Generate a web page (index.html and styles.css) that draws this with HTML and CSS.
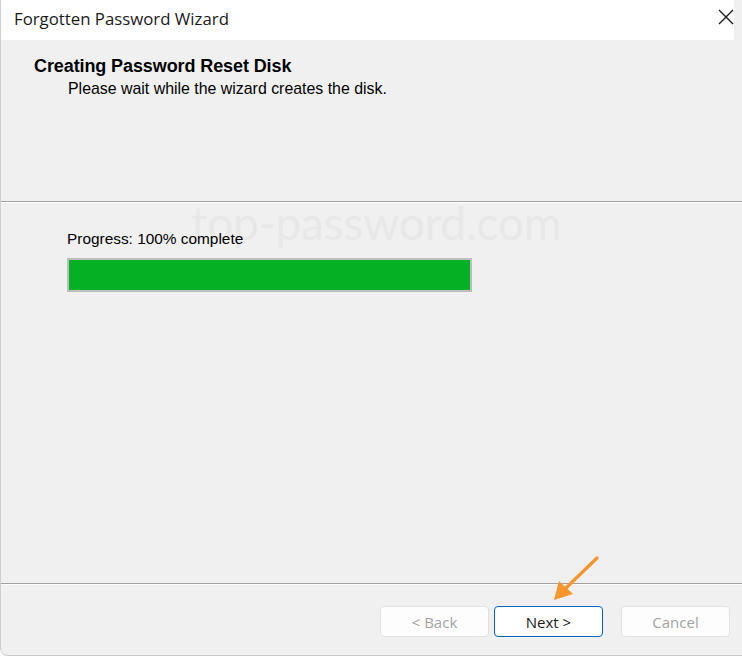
FILE: index.html
```html
<!DOCTYPE html>
<html>
<head>
<meta charset="utf-8">
<link rel="stylesheet" href="styles.css">
</head>
<body>
<div class="window">
  <div class="titlebar">
    <span class="title">Forgotten Password Wizard</span>
    <span class="close">
      <svg width="16" height="16" viewBox="0 0 16 16"><path d="M1 1 L15 15 M15 1 L1 15" stroke="#1a1a1a" stroke-width="1.4" fill="none"/></svg>
    </span>
  </div>
  <div class="header">
    <div class="heading">Creating Password Reset Disk</div>
    <div class="subheading">Please wait while the wizard creates the disk.</div>
  </div>
  <div class="content">
    <div class="watermark">top-password.com</div>
    <div class="progress-label">Progress: 100% complete</div>
    <div class="progress"><div class="progress-fill" style="width:100%"></div></div>
  </div>
  <div class="footer">
    <button class="btn disabled">&lt; Back</button>
    <button class="btn primary">Next &gt;</button>
    <button class="btn disabled cancel">Cancel</button>
  </div>
  <svg class="arrow" width="60" height="60" viewBox="0 0 60 60">
    <path d="M51 2 L20 32" stroke="#f7962a" stroke-width="3.2" stroke-linecap="round" fill="none"/>
    <path d="M8 44 L13 25 L27 38 Z" fill="#f7962a"/>
  </svg>
</div>
</body>
</html>
```
FILE: styles.css
```css
html, body {
  margin: 0;
  padding: 0;
  background: #ffffff;
  overflow: hidden;
}
body {
  font-family: "Liberation Sans", Arial, sans-serif;
  color: #000;
}
.window {
  position: relative;
  width: 760px;
  height: 655px;
  background: #f0f0f0;
  border-left: 1px solid #cfcfcf;
  border-bottom: 1px solid #c8c8c8;
  border-bottom-left-radius: 8px;
  display: flex;
  flex-direction: column;
  overflow: hidden;
}
.titlebar {
  height: 40px;
  flex: none;
  background: #ffffff;
  display: flex;
  align-items: center;
  justify-content: space-between;
  padding: 0 0 0 13px;
  width: 720px;
}
.title {
  font-family: "Open Sans", "Noto Sans", sans-serif;
  font-size: 16.8px;
  color: #1a1a1a;
  margin-top: -4px;
}
.close {
  display: flex;
  width: 16px;
  height: 16px;
  margin-top: -6px;
}
.header {
  height: 162px;
  flex: none;
  box-sizing: border-box;
  padding: 16px 0 0 33px;
  border-bottom: 1px solid #a0a0a0;
  box-shadow: 0 1px 0 #ffffff;
}
.heading {
  font-weight: bold;
  font-size: 18px;
  color: #000;
  letter-spacing: -0.1px;
}
.subheading {
  font-size: 15.9px;
  padding-left: 34px;
  margin-top: 3px;
}
.content {
  position: relative;
  flex: 1;
  padding: 28px 0 0 66px;
  border-bottom: 1px solid #a0a0a0;
  box-shadow: 0 1px 0 #ffffff;
}
.watermark {
  position: absolute;
  left: 190px;
  top: -7px;
  font-family: "Lato", sans-serif;
  font-size: 46px;
  color: #e8e8e8;
  letter-spacing: -0.2px;
}
.progress-label {
  position: relative;
  font-size: 15.4px;
  color: #000;
}
.progress {
  position: relative;
  margin-top: 10px;
  width: 401px;
  height: 30px;
  border: 2px solid #bdbdbd;
  background: #e6e6e6;
}
.progress-fill {
  height: 100%;
  background: #06b025;
}
.footer {
  height: 71px;
  flex: none;
  box-sizing: border-box;
  padding: 22px 0 0 379px;
  display: flex;
  align-items: flex-start;
  gap: 5px;
}
.btn {
  width: 109px;
  height: 31px;
  border-radius: 4px;
  font-family: "Open Sans", "Noto Sans", sans-serif;
  font-size: 15px;
  background: #fdfdfd;
  border: 1px solid #e2e2e2;
  color: #a3a3a3;
  padding: 0;
}
.btn.primary {
  border: 1.5px solid #0067c0;
  background: #ffffff;
  color: #1a1a1a;
}
.btn.cancel {
  margin-left: 13px;
}
.arrow {
  position: absolute;
  left: 545px;
  top: 556px;
}
```
